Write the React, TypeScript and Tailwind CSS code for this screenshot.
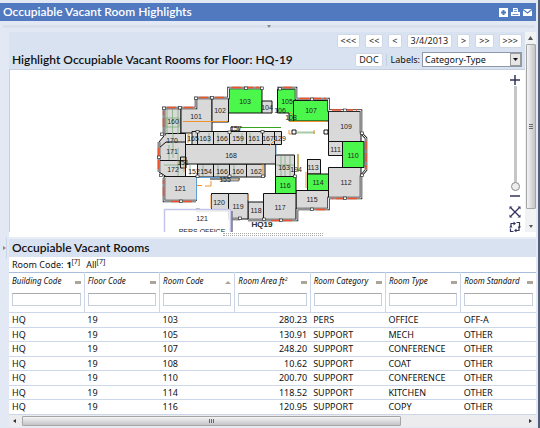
import React from "react";

const columns = [
  "Building Code",
  "Floor Code",
  "Room Code",
  "Room Area ft²",
  "Room Category",
  "Room Type",
  "Room Standard",
];

const rows = [
  ["HQ", "19", "103", "280.23", "PERS", "OFFICE", "OFF-A"],
  ["HQ", "19", "105", "130.91", "SUPPORT", "MECH", "OTHER"],
  ["HQ", "19", "107", "248.20", "SUPPORT", "CONFERENCE", "OTHER"],
  ["HQ", "19", "108", "10.62", "SUPPORT", "COAT", "OTHER"],
  ["HQ", "19", "110", "200.70", "SUPPORT", "CONFERENCE", "OTHER"],
  ["HQ", "19", "114", "118.52", "SUPPORT", "KITCHEN", "OTHER"],
  ["HQ", "19", "116", "120.95", "SUPPORT", "COPY", "OTHER"],
];

const GRAY = "#d9d9d9";
const GREEN = "#4cf74c";

const rooms: { d: string; fill: string }[] = [
  { d: "M164 108H181V134H164Z", fill: GRAY },
  { d: "M181 108H196V98H212V133H181Z", fill: GRAY },
  { d: "M212 98H228.5V122H212Z", fill: GRAY },
  { d: "M228.5 88.500H262V113H228.500Z", fill: GREEN },
  { d: "M262 101H272V113H262Z", fill: GRAY },
  { d: "M277.500 89H296V101H293.500V121H289V113H277.500Z", fill: GREEN },
  { d: "M293.500 100.500H328.500V121H293.500Z", fill: GREEN },
  { d: "M328.500 111.500H361V141.500H328.500Z", fill: GRAY },
  { d: "M328.500 141.500H342.500V155.500H328.500Z", fill: GRAY },
  { d: "M342.500 141.500H364V167.500H342.500Z", fill: GREEN },
  { d: "M328.500 167.500H361V198H328.500Z", fill: GRAY },
  { d: "M307.500 159.500H320.500V174H307.500Z", fill: GRAY },
  { d: "M307.500 174H328.500V190.500H307.500Z", fill: GREEN },
  { d: "M296 190.500H328.500V209H296Z", fill: GRAY },
  { d: "M275.500 155H294.500V176.500H275.500Z", fill: GRAY },
  { d: "M275.500 176.500H296V193.500H275.500Z", fill: GREEN },
  { d: "M263.500 193.500H296V219.500H263.500Z", fill: GRAY },
  { d: "M248 202H263.500V219.500H248Z", fill: GRAY },
  { d: "M228.500 193.500H248V219H228.500Z", fill: GRAY },
  { d: "M211.500 193.500H228.500V211H211.500Z", fill: GRAY },
  { d: "M164 176.500H196.500V200.500H164Z", fill: GRAY },
  { d: "M159 142L166 133.500H185.500V160.500H159Z", fill: GRAY },
  { d: "M159 160.500H185.500V176.500H166L159 172Z", fill: GRAY },
  { d: "M192 131.500H281.500V144.500H192Z", fill: GRAY },
  { d: "M197.500 164H265V177H197.500Z", fill: GRAY },
  { d: "M185.500 144.500H275.500V164H185.500Z", fill: GRAY },
];

const labels: [string, number, number][] = [
  ["160", 173, 124], ["101", 196, 118.5], ["102", 220, 113], ["103", 245, 104],
  ["104", 267, 110], ["105", 287, 104], ["106", 280, 113], ["108", 291, 120],
  ["107", 311, 113], ["109", 346, 129], ["111", 335.5, 151.5], ["110", 353, 158],
  ["112", 346, 185], ["113", 313, 170], ["114", 318, 185], ["115", 312, 202],
  ["116", 285, 188], ["117", 280, 210], ["118", 256, 213], ["119", 238, 209],
  ["120", 219, 205], ["121", 180, 191], ["170", 172, 142.5], ["171", 172, 154],
  ["172", 173, 172], ["151", 183, 165], ["165", 193, 140.5], ["163", 205, 140.5],
  ["166", 222, 140.5], ["159", 238, 140.5], ["161", 254, 140.5], ["167", 268, 140.5],
  ["129", 280, 140.5], ["168", 231, 157.5], ["152", 194, 174], ["154", 206, 174],
  ["166", 222, 174], ["160", 238, 174], ["162", 256, 174], ["155", 225, 182],
  ["163", 284, 169.500], ["194", 296, 172], ["157", 236, 131], ["121", 202, 220.500],
];

const outline =
  "M159 172V142M164 136V108H196V98H228.500V88H262M277 88H296V99H328.500V110.500H361V133L366 138V170L361 176V198H328.500V209H297V220H248M240 219H228.500M211.500 211H198M196 201H164V178";

const columnsAt: [number, number][] = [
  [164, 108], [180, 107.500], [196, 98], [212, 97.500], [246, 88],
  [262, 88], [280, 88.500], [312, 99], [345, 110],
  [362, 133], [362, 175],
  [345, 198], [312, 209], [281, 220], [264, 219],
  [240, 218], [198, 210], [181, 201], [161, 175],
  [159, 157], [162, 134], [197.500, 131.500], [229.500, 132],
  [262.500, 131.500], [197.500, 176], [229.500, 176], [263, 176], [295, 176],
];

function FloorPlan() {
  return (
    <svg
      className="block h-[162px] w-full"
      viewBox="10 70 515 162"
      preserveAspectRatio="xMinYMin slice"
      role="img"
      aria-label="Floor plan HQ19"
    >
      <g fill="none" stroke="#111" strokeWidth="1">
        {rooms.map((r) => (
          <path key={r.d} d={r.d} fill={r.fill} />
        ))}
        <path d="M213.500 131.500V144.500M229.500 131.500V144.500M246.500 131.500V144.500M262.500 131.500V144.500M274.500 131.500V144.500M213.500 164V177M229.500 164V177M246.500 164V177M197.500 131.500V144.500M159 148L166 142H185.500M180.500 157H186V168H180.500ZM210 179H240M307 159.500H320M231 127H239V131H231ZM292 130H296V134H292ZM324 130H328V134H324Z" />
      </g>
      <g fill="none" stroke="#73a96e" strokeWidth="1">
        <path d="M167 108V134M172.500 108V134M178 108V134M166 118H179V127H166ZM173 134V158M178 148V176M169 145V160M189 133V142M209 133V143M218 133V143M242 133V143M250 133V143M190 165V175M203 165V176M218 165V176M234 165V176M281 156V176M285 156V176M290 156V176M276 165H294M164 165H180" opacity=".7" />
        <path d="M240 127.500H281M298 154V172" stroke="#36a51c" />
        <path d="M297 132.500H315" stroke="#a7cba5" strokeWidth="2" />
      </g>
      <path d="M183 121.500H227M188 133V143M184 158V172M211 195V208M196.500 185.500H202M211 181V186H205M248 195V200M289 121.500H326M289 130V134H292M314 130V134M269 146L276 139M306 172V188M298 154V168M289 111L293 115M263 164V175" fill="none" stroke="#f0902c" strokeWidth="1" />
      <path d="M196.500 178V200M276 145V155M197 177.500H235" fill="none" stroke="#5d9fd8" strokeWidth="1" />
      <path d="M222 178H239V181H222Z" fill="#c8b9a4" stroke="#555" strokeWidth=".7" />
      <path d={outline} fill="none" stroke="#333" strokeWidth="2.600" />
      <path d={outline} fill="none" stroke="#e8e8ee" strokeWidth="1" />
      <path d="M167 107.500H178M184 107.500H193M199 97.500H209M215 97.500H225M232 87.500H259M283 87.500H293M300 98.500H326M332 110H357M366 141V169M357 198.500H332M325 209.500H316M292 220.500H268M192 201.500H168M163.500 196V180M158.500 169V145M163.500 127V111" fill="none" stroke="#f0522a" strokeWidth="1.500" strokeDasharray="9 3" />
      <g fill="#fff" stroke="#333" strokeWidth=".7">
        {columnsAt.map(([x, y]) => (
          <rect key={`${x}-${y}`} x={x - 1.5} y={y - 1} width="3" height="2.500" />
        ))}
      </g>
      <path d="M231.500 211V232" stroke="#77798a" strokeWidth="2.500" />
      <path d="M164.500 234V209.500H230.500V234" fill="#fff" fillOpacity=".88" stroke="#c5c5ec" strokeWidth="1.500" />
      <g fill="#222" fontSize="7" textAnchor="middle" fontFamily="'Liberation Sans', Arial, sans-serif">
        {labels.map(([t, x, y]) => (
          <text key={`${t}-${x}-${y}`} x={x} y={y}>{t}</text>
        ))}
        <text x="262" y="226.500" fontSize="8" fill="#000" stroke="#000" strokeWidth=".2">HQ19</text>
        <text x="202" y="234" fontSize="7">PERS OFFICE</text>
      </g>
    </svg>
  );
}

function ToolButton({ children }: { children: React.ReactNode }) {
  return (
    <button
      type="button"
      className="h-[14px] rounded-[2px] border border-[#cfd8e6] bg-white px-[3px] text-[9px] leading-[12px] text-[#222]"
    >
      {children}
    </button>
  );
}

function ZoomControls() {
  return (
    <div className="absolute top-1 right-1 flex w-3 flex-col items-center text-[#33335c]">
      <button type="button" aria-label="Zoom in" className="h-3">
        <svg className="size-3" viewBox="0 0 12 12" stroke="currentColor" strokeWidth="1.500"><path d="M6 1V11M1 6H11" /></svg>
      </button>
      <input
        type="range"
        aria-label="Zoom level"
        min={0}
        max={100}
        defaultValue={0}
        className="my-px h-[105px] w-3 appearance-none bg-transparent [direction:rtl] [writing-mode:vertical-lr] [&::-webkit-slider-runnable-track]:w-[3px] [&::-webkit-slider-runnable-track]:bg-[#c6c6c6] [&::-webkit-slider-thumb]:-ml-[3px] [&::-webkit-slider-thumb]:size-[9px] [&::-webkit-slider-thumb]:appearance-none [&::-webkit-slider-thumb]:rounded-full [&::-webkit-slider-thumb]:border [&::-webkit-slider-thumb]:border-[#8c8c8c] [&::-webkit-slider-thumb]:bg-[#eeeeee]"
      />
      <button type="button" aria-label="Zoom out" className="h-2">
        <svg className="h-2 w-3" viewBox="0 0 12 8" stroke="currentColor" strokeWidth="1.500"><path d="M1 5H11" /></svg>
      </button>
      <button type="button" aria-label="Zoom to extents" className="mt-[5px] h-[15px]">
        <svg className="size-3" viewBox="0 0 12 12" fill="none" stroke="currentColor"><path d="M2 2L10 10M10 2L2 10" strokeWidth="1.300" /><path d="M.5 3.500V.5H3.500ZM8.500 .5H11.500V3.500ZM11.500 8.500V11.500H8.500ZM3.500 11.500H.5V8.500Z" fill="currentColor" stroke="none" /></svg>
      </button>
      <button type="button" aria-label="Zoom window" className="h-4">
        <svg className="size-3" viewBox="0 0 12 12" fill="none" stroke="currentColor" strokeWidth="1.200"><path d="M2 6V2.500H5M7.500 1.500H10.500V6M10 6V9.500H7M4.500 10.500H1.500V7.500" /><path d="M4.500 .5L7 2.500L4.500 4.500ZM7.500 7.500L5 9.500L7.500 11.500ZM8.500 5.500H12L10.500 7.500ZM0 6.500H3.500L2 4.500Z" fill="currentColor" stroke="none" /></svg>
      </button>
    </div>
  );
}

export default function App() {
  return (
    <div className="border-r-2 border-[#526077] bg-[#e2e9f5] pb-px font-['Noto_Sans','Open_Sans',sans-serif] text-[9px] text-[#111]">
      <div className="pr-[2px] pt-[3px]">
        <header className="flex h-[18px] items-center justify-between bg-[#5079c0] pr-1 pl-[3px] text-white">
          <h1 className="font-['Lato','Noto_Sans',sans-serif] text-[12px] leading-[16px] font-semibold">Occupiable Vacant Room Highlights</h1>
          <div className="flex gap-[3px]">
            <button type="button" aria-label="Add">
              <svg className="block size-[9px]" viewBox="0 0 9 9"><path d="M0 0H9V9H0Z" fill="#fff" /><path d="M4.500 2V7M2 4.500H7" stroke="#5079c0" strokeWidth="2" /></svg>
            </button>
            <button type="button" aria-label="Print">
              <svg className="block size-[9px]" viewBox="0 0 9 9"><path d="M2 0H6L7 1V4H9V8H0V4H2Z" fill="#fff" /><path d="M3 1.500H6M3 3.500H6M1.500 6.500H7.500" stroke="#5079c0" strokeWidth=".8" /></svg>
            </button>
            <button type="button" aria-label="Mail">
              <svg className="block size-[9px]" viewBox="0 0 9 9"><path d="M0 1H9V8H0Z" fill="#fff" /><path d="M0 1.500L4.500 5L9 1.500" fill="none" stroke="#5079c0" strokeWidth="1.200" /></svg>
            </button>
          </div>
        </header>
      </div>
      <div className="mx-[3px] mt-1 mb-1 flex h-[3px] justify-center bg-[#d8e0ec]">
        <svg className="h-[3px] w-1" viewBox="0 0 4 3"><path d="M0 0H4L2 3Z" fill="#888" /></svg>
      </div>

      <div className="flex">
        <div className="flex w-[9px] shrink-0 items-center justify-center">
          <div className="mt-[37px] flex h-[22px] w-1 items-center rounded-sm border-r border-[#ccd5e5]">
            <svg className="h-1 w-[3px]" viewBox="0 0 3 4"><path d="M0 0L3 2L0 4Z" fill="#888" /></svg>
          </div>
        </div>

        <main className="min-w-0 flex-1 pr-[2px]">
          <section className="flex">
            <div className="min-w-0 flex-1">
              <div className="h-[37px] bg-[#d9e2f0] pr-[3px] pt-[2px]">
                <div className="flex justify-end gap-[5px]">
                  <ToolButton>&lt;&lt;&lt;</ToolButton>
                  <ToolButton>&lt;&lt;</ToolButton>
                  <ToolButton>&lt;</ToolButton>
                  <ToolButton>3/4/2013</ToolButton>
                  <ToolButton>&gt;</ToolButton>
                  <ToolButton>&gt;&gt;</ToolButton>
                  <ToolButton>&gt;&gt;&gt;</ToolButton>
                </div>
                <div className="mt-1 flex items-center pl-[3px]">
                  <h2 className="flex-1 font-['Lato','Noto_Sans',sans-serif] text-[12px] leading-[15px] font-semibold whitespace-nowrap">
                    Highlight Occupiable Vacant Rooms for Floor: HQ-19
                  </h2>
                  <ToolButton>DOC</ToolButton>
                  <label htmlFor="labels" className="ml-[3px] border-l border-[#c3cfe1] pl-1 leading-[12px]">Labels:</label>
                  <div className="relative ml-[2px] flex">
                    <select id="labels" className="h-[15px] w-[100px] appearance-none border border-[#8d98a8] bg-white pl-[2px] text-[9px] leading-[13px]">
                      <option>Category-Type</option>
                    </select>
                    <span className="pointer-events-none absolute top-px right-px flex h-[13px] w-[11px] items-center justify-center border border-[#9a9a9a] bg-[#e6e6e6]">
                      <svg className="h-[3px] w-[5px]" viewBox="0 0 5 3"><path d="M0 0H5L2.500 3Z" fill="#111" /></svg>
                    </span>
                  </div>
                </div>
              </div>
              <div className="relative overflow-hidden border-t border-l border-[#c5cfde] bg-white">
                <FloorPlan />
                <ZoomControls />
              </div>
            </div>
            <div className="flex w-[11px] flex-col items-center bg-[#f1f2f4]">
              <svg className="my-1 h-1 w-[5px]" viewBox="0 0 5 4"><path d="M2.500 0L5 4H0Z" fill="#555" /></svg>
              <div className="flex w-[10px] flex-1 items-center justify-center rounded-[1px] border border-[#a5a5a5] bg-linear-to-r from-[#f4f4f4] to-[#c4c4c8]">
                <svg className="h-[5px] w-1" viewBox="0 0 4 5"><path d="M0 .5H4M0 2.500H4M0 4.500H4" stroke="#666" /></svg>
              </div>
              <svg className="mt-4 mb-1 h-[3px] w-1" viewBox="0 0 4 3"><path d="M0 0H4L2 3Z" fill="#555" /></svg>
            </div>
          </section>

          <div className="flex h-[7px] justify-center border-b-2 border-[#e8edf6] bg-white">
            <div className="mt-px h-[3px] w-[100px] border-y border-dotted border-[#aaaaaa]" />
          </div>

          <section className="bg-white">
            <h2 className="bg-[#d9e2f0] pl-[3px] font-['Lato','Noto_Sans',sans-serif] text-[12px] leading-[18px] font-semibold">Occupiable Vacant Rooms</h2>
            <div className="flex h-[15px] items-center pl-[3px] leading-[12px]">
              <span>Room Code:</span>
              <a href="#one" className="ml-[3px]"><b>1</b><sup className="text-[7px]">[7]</sup></a>
              <a href="#all" className="ml-[6px]">All<sup className="text-[7px]">[7]</sup></a>
            </div>
            <table className="w-full table-fixed border-collapse border-t border-[#a9bddc]">
              <thead>
                <tr className="h-10 border-b border-[#cbd6e8]">
                  {columns.map((c, i) => (
                    <th key={c} className="border-r border-[#cbd6e8] px-[3px] py-0 text-left align-top font-normal last:border-r-0">
                      <div className="flex h-[15px] items-center justify-between">
                        <span className="text-[8px] leading-[12px] whitespace-nowrap italic">{c}</span>
                        {i === 2 ? (
                          <svg className="mt-1 h-[3px] w-[6px] shrink-0" viewBox="0 0 6 3"><path d="M3 0L6 3H0Z" fill="#aaa598" /></svg>
                        ) : (
                          <span className="mt-1 h-[3px] w-[6px] shrink-0 bg-[#aaa598]" />
                        )}
                      </div>
                      <input type="text" aria-label={`Filter ${c}`} className="mt-[5px] block h-[13px] w-full border border-[#c8d0dc] border-t-[#aaaaaa] bg-white px-1 text-[9px]" />
                    </th>
                  ))}
                </tr>
              </thead>
              <tbody>
                {rows.map((r) => (
                  <tr key={r[2]} className="border-b border-[#ccd8ea] odd:h-[15px] even:h-[14px]">
                    {r.map((v, i) => (
                      <td key={i} className={i === 3 ? "px-[3px] py-0 text-right leading-[12px]" : "px-[3px] py-0 leading-[12px]"}>{v}</td>
                    ))}
                  </tr>
                ))}
              </tbody>
            </table>
            <div className="flex h-3 items-center bg-[#ececee]">
              <svg className="mx-1 h-1 w-[3px]" viewBox="0 0 3 4"><path d="M3 0V4L0 2Z" fill="#333" /></svg>
              <div className="ml-[2px] flex h-[10px] w-[72%] items-center justify-center rounded-[1px] border border-[#a5a5a5] bg-linear-to-b from-[#f4f4f4] to-[#c4c4c8]">
                <svg className="h-1 w-[6px]" viewBox="0 0 6 4"><path d="M.5 0V4M2.500 0V4M4.500 0V4" stroke="#666" /></svg>
              </div>
              <svg className="mr-1 ml-auto h-1 w-[3px]" viewBox="0 0 3 4"><path d="M0 0V4L3 2Z" fill="#333" /></svg>
            </div>
          </section>
        </main>
      </div>
    </div>
  );
}
